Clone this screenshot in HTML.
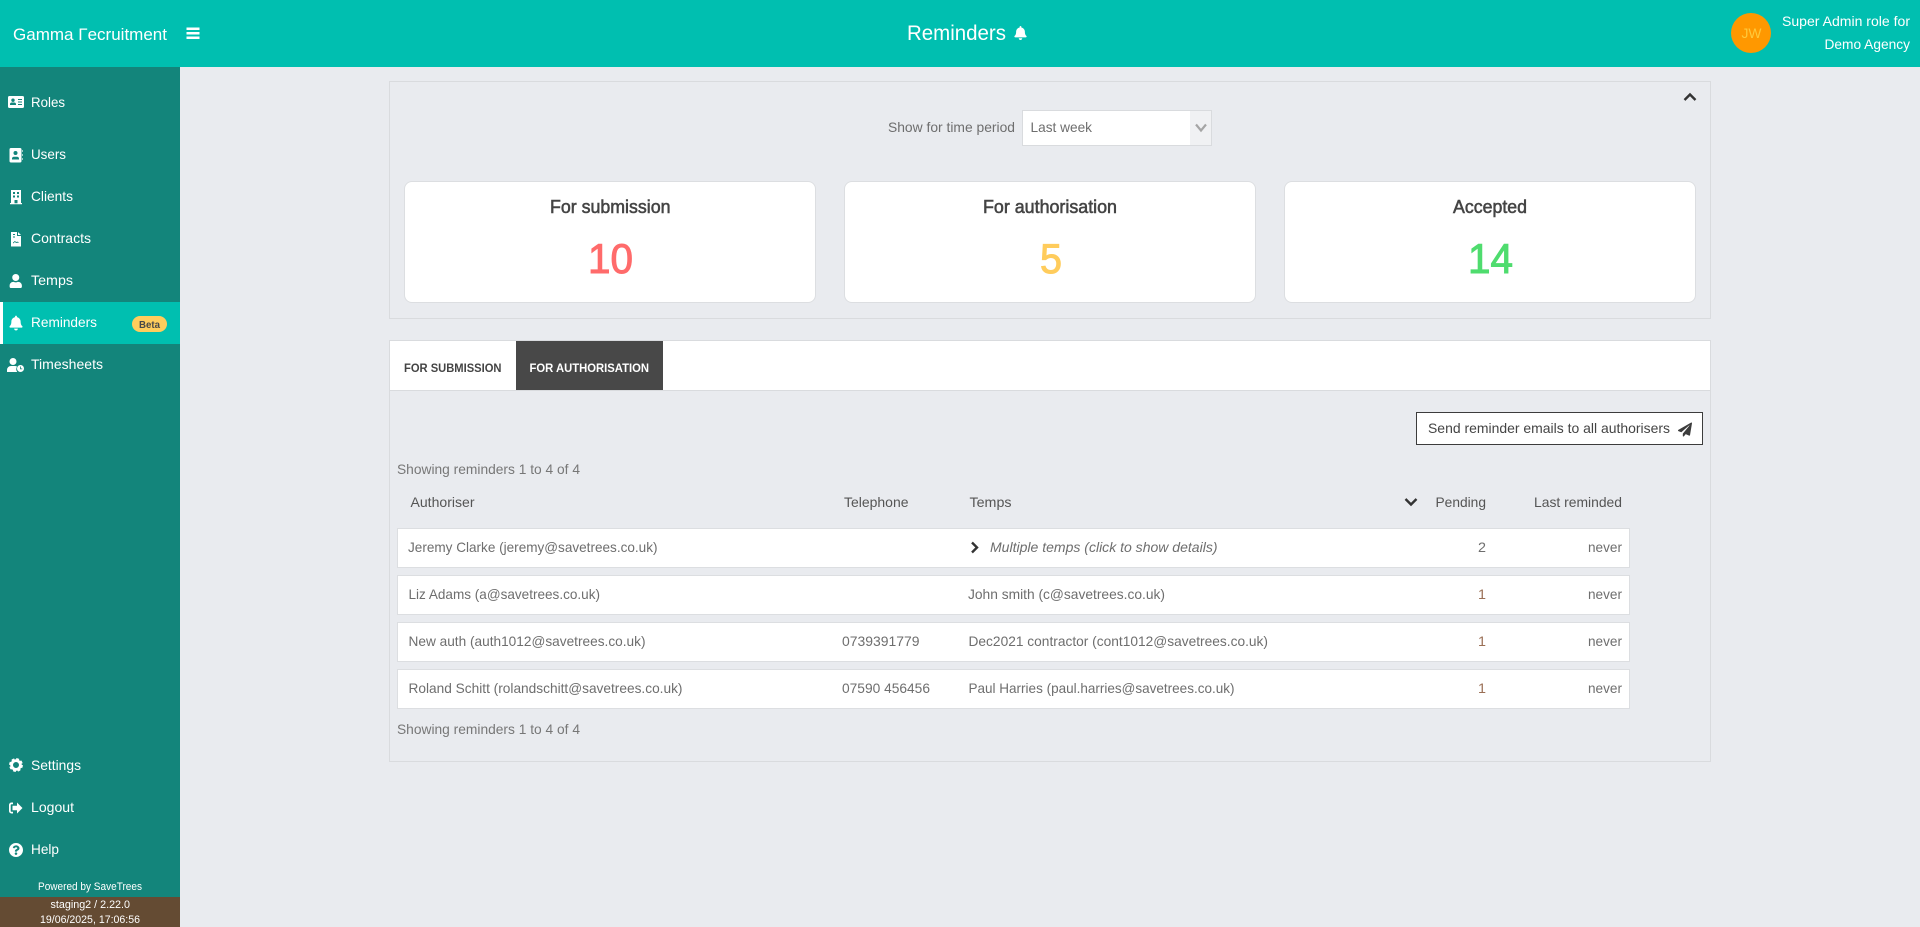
<!DOCTYPE html>
<html lang="en"><head><meta charset="utf-8"><title>Reminders</title>
<style>
html,body{margin:0;padding:0;width:1920px;height:927px;overflow:hidden;background:#e9ebef;font-family:"Liberation Sans",sans-serif}
.b{position:absolute;box-sizing:border-box}
.row{left:397px;width:1233px;height:40px;background:#fff;border:1px solid #dcdee1}
svg.t{position:absolute;left:0;top:0}
text{font-family:"Liberation Sans",sans-serif;font-size:14px;fill:#6e6e6e}
.s text{fill:#fff}
.card{background:#fff;border:1px solid #dcdee1;border-radius:8px;top:181px;height:122px}
.title{font-size:18px;fill:#444;stroke:#444;stroke-width:.55px}
.num{font-size:42px;stroke-width:1px}
.h{fill:#555}
</style></head><body>
<div class="b" style="left:0;top:0;width:1920px;height:67px;background:#00bfb0"></div>
<div class="b" style="left:0;top:67px;width:180px;height:860px;background:#13857b"></div>
<div class="b" style="left:0;top:302px;width:180px;height:42px;background:#00bfb0;border-left:3px solid #fff"></div>
<div class="b" style="left:0;top:897px;width:180px;height:30px;background:#644b33"></div>
<div class="b" style="left:132px;top:316px;width:35px;height:16px;border-radius:8px;background:#ffcd5c"></div>

<div class="b" style="left:389px;top:81px;width:1322px;height:238px;border:1px solid #d9dbde"></div>
<div class="b" style="left:1022px;top:110px;width:190px;height:36px;background:#fff;border:1px solid #d9dbde"></div>
<div class="b" style="left:1190px;top:111px;width:21px;height:34px;background:#f0f1f3"></div>
<div class="b card" style="left:404px;width:412px"></div>
<div class="b card" style="left:844px;width:412px"></div>
<div class="b card" style="left:1284px;width:412px"></div>

<div class="b" style="left:389px;top:340px;width:1322px;height:422px;border:1px solid #d9dbde"></div>
<div class="b" style="left:390px;top:341px;width:1320px;height:50px;background:#fff;border-bottom:1px solid #d9dbde"></div>
<div class="b" style="left:516px;top:341px;width:147px;height:49px;background:#484848"></div>
<div class="b" style="left:1416px;top:412px;width:287px;height:33px;background:#fff;border:1px solid #3c3c3c"></div>
<div class="b row" style="top:528px"></div>
<div class="b row" style="top:575px"></div>
<div class="b row" style="top:622px"></div>
<div class="b row" style="top:669px"></div>
<div class="b" style="left:1731px;top:13px;width:40px;height:40px;border-radius:50%;background:#ff9800"></div>

<svg class="t" width="1920" height="927" viewBox="0 0 1920 927" xmlns="http://www.w3.org/2000/svg">
<!-- header -->
<g class="s">
<text x="13" y="40" style="font-size:17px" textLength="154" lengthAdjust="spacingAndGlyphs">Gamma Γecruitment</text>
<text x="907" y="40" style="font-size:21px" textLength="99" lengthAdjust="spacingAndGlyphs">Reminders</text>
<text x="1782" y="26" textLength="128" lengthAdjust="spacingAndGlyphs">Super Admin role for</text>
<text x="1824.5" y="49" textLength="85.5" lengthAdjust="spacingAndGlyphs">Demo Agency</text>
</g>
<text x="1741.5" y="38" style="fill:#ffc93c" textLength="20" lengthAdjust="spacingAndGlyphs">JW</text>
<path d="M186.500 27.500h13v2.500h-13zM186.500 32h13v2.500h-13zM186.500 36.500h13v2.500h-13z" fill="#fff"/>
<svg x="1014" y="26" width="13" height="14" viewBox="0 0 448 512" fill="#fff"><path d="M224 512c35.320 0 63.970-28.650 63.970-64H160.030c0 35.350 28.650 64 63.970 64zm215.390-149.710c-19.320-20.760-55.470-51.990-55.470-154.290 0-77.700-54.480-139.900-127.940-155.160V32c0-17.670-14.320-32-31.980-32s-31.980 14.330-31.980 32v20.840C118.560 68.100 64.080 130.300 64.080 208c0 102.300-36.150 133.530-55.470 154.290-6 6.450-8.660 14.160-8.610 21.710.11 16.400 12.980 32 32.100 32h383.800c19.120 0 32-15.600 32.100-32 .05-7.550-2.610-15.270-8.610-21.710z"/></svg>

<!-- sidebar -->
<g class="s">
<text x="31" y="107" textLength="34" lengthAdjust="spacingAndGlyphs">Roles</text>
<text x="31" y="159" textLength="35" lengthAdjust="spacingAndGlyphs">Users</text>
<text x="31" y="201" textLength="42" lengthAdjust="spacingAndGlyphs">Clients</text>
<text x="31" y="243" textLength="60" lengthAdjust="spacingAndGlyphs">Contracts</text>
<text x="31" y="285" textLength="42" lengthAdjust="spacingAndGlyphs">Temps</text>
<text x="31" y="327" textLength="66" lengthAdjust="spacingAndGlyphs">Reminders</text>
<text x="31" y="369" textLength="72" lengthAdjust="spacingAndGlyphs">Timesheets</text>
<text x="31" y="770" textLength="50" lengthAdjust="spacingAndGlyphs">Settings</text>
<text x="31" y="812" textLength="43" lengthAdjust="spacingAndGlyphs">Logout</text>
<text x="31" y="854" textLength="28" lengthAdjust="spacingAndGlyphs">Help</text>
<text x="38" y="890" style="font-size:11px" textLength="104" lengthAdjust="spacingAndGlyphs">Powered by SaveTrees</text>
<text x="50.500" y="908" style="font-size:11px" textLength="79.500" lengthAdjust="spacingAndGlyphs">staging2 / 2.22.0</text>
<text x="40" y="923" style="font-size:11px" textLength="100" lengthAdjust="spacingAndGlyphs">19/06/2025, 17:06:56</text>
</g>
<text x="139" y="328" style="font-size:10px;font-weight:bold;fill:#484848" textLength="21" lengthAdjust="spacingAndGlyphs">Beta</text>

<!-- sidebar icons -->
<g fill="#fff">
<path fill-rule="evenodd" d="M9.500 96h13a1.500 1.500 0 0 1 1.500 1.500v9a1.500 1.500 0 0 1-1.500 1.500h-13A1.500 1.500 0 0 1 8 106.500v-9A1.500 1.500 0 0 1 9.500 96zM13 98.500a1.700 1.700 0 1 0 0 3.400 1.700 1.700 0 0 0 0-3.400zM10 105h6v-1a1.800 1.800 0 0 0-1.800-1.500h-2.400A1.800 1.800 0 0 0 10 104zM18 99v1h4v-1zM18 101.500v1h4v-1zM18 104v1h4v-1z"/>
<path fill-rule="evenodd" d="M11 148h9a1.500 1.500 0 0 1 1.500 1.500v11.500a1.500 1.500 0 0 1-1.500 1.500h-9a1.500 1.500 0 0 1-1.500-1.500v-11.500A1.500 1.500 0 0 1 11 148zM15.500 151a2 2 0 1 0 0 4 2 2 0 0 0 0-4zM12 159.500h7v-1a2 2 0 0 0-2-1.800h-3a2 2 0 0 0-2 1.800z"/>
<path d="M22 150h.6v2H22zM22 154h.6v2H22zM22 158h.6v2H22z"/>
<path fill-rule="evenodd" d="M11 190h10v13h1v1.200H10V203h1zM13 192v2h2v-2zM17 192v2h2v-2zM13 195.500v2h2v-2zM17 195.500v2h2v-2zM14.500 200v3.200h3V200z"/>
<path fill-rule="evenodd" d="M11 232h6v4h4v10.500H11zM18 232l3 3h-3zM13 234v1h2v-1zM13 236.500v1h2v-1zM13 242.500c1-.5 1.500-1.500 2-1.500s.5 1 1 1 1-.5 2.500 0v1c-1.500-.5-2 0-2.500 0s-.5-1-1-1-1 1-2 1.500z"/>
<svg x="9.500" y="274" width="12.500" height="14" viewBox="0 0 448 512"><path d="M224 256c70.700 0 128-57.300 128-128S294.700 0 224 0 96 57.300 96 128s57.300 128 128 128zm89.600 32h-16.700c-22.200 10.200-46.900 16-72.900 16s-50.600-5.800-72.900-16h-16.700C60.200 288 0 348.200 0 422.400V464c0 26.500 21.500 48 48 48h352c26.500 0 48-21.500 48-48v-41.600c0-74.200-60.200-134.400-134.400-134.400z"/></svg>
<svg x="9.500" y="315.500" width="13" height="15" viewBox="0 0 448 512"><path d="M224 512c35.320 0 63.970-28.650 63.970-64H160.030c0 35.350 28.650 64 63.970 64zm215.390-149.710c-19.320-20.760-55.470-51.990-55.470-154.290 0-77.700-54.480-139.900-127.940-155.160V32c0-17.670-14.320-32-31.980-32s-31.980 14.330-31.980 32v20.840C118.560 68.100 64.080 130.300 64.080 208c0 102.300-36.150 133.530-55.470 154.290-6 6.450-8.660 14.160-8.610 21.710.11 16.400 12.980 32 32.100 32h383.800c19.120 0 32-15.600 32.100-32 .05-7.550-2.610-15.270-8.610-21.710z"/></svg>
<circle cx="13" cy="361.500" r="3.500"/>
<path d="M7 372v-2a4 4 0 0 1 4-4h4a4 4 0 0 1 2 .6 5 5 0 0 0 .2 5.400z"/>
<circle cx="20.500" cy="368.500" r="3.500"/>
<path d="M20.100 366.500h.8v2h1.400v.8h-2.200z" fill="#13857b"/>
<circle cx="16" cy="765" r="4.400" fill="none" stroke="#fff" stroke-width="2.800"/>
<circle cx="16" cy="765" r="6" fill="none" stroke="#fff" stroke-width="1.800" stroke-dasharray="2.900 1.810"/>
<path d="M13 802.500H11.500A2.500 2.500 0 0 0 9 805v6a2.500 2.500 0 0 0 2.500 2.500H13v-1.700h-1.500a.8.800 0 0 1-.8-.8v-6a.8.800 0 0 1 .8-.8H13z"/>
<path d="M17 802.500l5.500 5.500-5.500 5.500v-3.200h-4.500v-4.600H17z"/>
<svg x="9" y="843" width="14" height="14" viewBox="8 8 496 496"><path d="M504 256c0 136.997-111.043 248-248 248S8 392.997 8 256C8 119.083 119.043 8 256 8s248 111.083 248 248zM262.655 90c-54.497 0-89.255 22.957-116.549 63.758-3.536 5.286-2.353 12.415 2.715 16.258l34.699 26.310c5.205 3.947 12.621 3.008 16.665-2.122 17.864-22.658 30.113-35.797 57.303-35.797 20.429 0 45.698 13.148 45.698 32.958 0 14.976-12.363 22.667-32.534 33.976C247.128 238.528 216 254.941 216 296v4c0 6.627 5.373 12 12 12h56c6.627 0 12-5.373 12-12v-1.333c0-28.462 83.186-29.647 83.186-106.667 0-58.002-60.165-102-116.531-102zM256 338c-25.365 0-46 20.635-46 46 0 25.364 20.635 46 46 46s46-20.636 46-46c0-25.365-20.635-46-46-46z"/></svg>
</g>

<!-- filter panel -->
<path d="M1684.500 100l5.500-5.500 5.500 5.500" fill="none" stroke="#333" stroke-width="2.400"/>
<text x="888" y="132" textLength="127" lengthAdjust="spacingAndGlyphs">Show for time period</text>
<text x="1030.500" y="132" textLength="61.500" lengthAdjust="spacingAndGlyphs">Last week</text>
<path d="M1196 124.500l5 6 5-6" fill="none" stroke="#a5a5a5" stroke-width="2.200"/>
<text x="550" y="213" class="title" textLength="120.500" lengthAdjust="spacingAndGlyphs" style="font-size:18px">For submission</text>
<text x="983" y="213" class="title" textLength="134" lengthAdjust="spacingAndGlyphs" style="font-size:18px">For authorisation</text>
<text x="1453" y="213" class="title" textLength="74" lengthAdjust="spacingAndGlyphs" style="font-size:18px">Accepted</text>
<text x="588" y="273" class="num" style="font-size:42px;fill:#ff6b6b;stroke:#ff6b6b" textLength="45" lengthAdjust="spacingAndGlyphs">10</text>
<text x="1040" y="273" class="num" style="font-size:42px;fill:#ffcc5c;stroke:#ffcc5c" textLength="22" lengthAdjust="spacingAndGlyphs">5</text>
<text x="1468" y="273" class="num" style="font-size:42px;fill:#4fdc6e;stroke:#4fdc6e" textLength="45" lengthAdjust="spacingAndGlyphs">14</text>

<!-- tabs -->
<text x="404" y="372" style="font-size:11.500px;font-weight:bold;fill:#444" textLength="97.500" lengthAdjust="spacingAndGlyphs">FOR SUBMISSION</text>
<text x="529.500" y="372" style="font-size:11.500px;font-weight:bold;fill:#fff" textLength="119.500" lengthAdjust="spacingAndGlyphs">FOR AUTHORISATION</text>

<!-- button -->
<text x="1428" y="433" style="fill:#444" textLength="242" lengthAdjust="spacingAndGlyphs">Send reminder emails to all authorisers</text>
<svg x="1678" y="422.500" width="14" height="14" viewBox="0 0 512 512" fill="#3c3c3c"><path d="M476 3.200L12.500 270.600c-18.100 10.400-15.800 35.600 2.200 43.200L121 358.400l287.300-253.200c5.500-4.900 13.300 2.600 8.600 8.300L176 407v80.500c0 23.600 28.500 32.900 42.500 15.800L282 426l124.600 52.200c14.200 6 30.400-2.900 33-18.200l72-432C515 7.800 493.300-6.800 476 3.200z"/></svg>

<!-- table -->
<text x="397" y="474" style="fill:#777" textLength="183" lengthAdjust="spacingAndGlyphs">Showing reminders 1 to 4 of 4</text>
<text x="410.500" y="507" class="h" textLength="64" lengthAdjust="spacingAndGlyphs">Authoriser</text>
<text x="844" y="507" class="h" textLength="64.500" lengthAdjust="spacingAndGlyphs">Telephone</text>
<text x="969.500" y="507" class="h" textLength="42" lengthAdjust="spacingAndGlyphs">Temps</text>
<path d="M1405.500 499l5.500 5.500 5.500-5.500" fill="none" stroke="#333" stroke-width="2.400"/>
<text x="1435.500" y="507" class="h" textLength="50.500" lengthAdjust="spacingAndGlyphs">Pending</text>
<text x="1534" y="507" class="h" textLength="88" lengthAdjust="spacingAndGlyphs">Last reminded</text>

<text x="408" y="552" textLength="249.500" lengthAdjust="spacingAndGlyphs">Jeremy Clarke (jeremy@savetrees.co.uk)</text>
<path d="M972 542.500l5 5-5 5" fill="none" stroke="#333" stroke-width="2.400"/>
<text x="990" y="552" style="font-style:italic" textLength="227.500" lengthAdjust="spacingAndGlyphs">Multiple temps (click to show details)</text>
<text x="1478" y="552" textLength="8" lengthAdjust="spacingAndGlyphs">2</text>
<text x="1588" y="552" textLength="34" lengthAdjust="spacingAndGlyphs">never</text>

<text x="408.500" y="599" textLength="191.500" lengthAdjust="spacingAndGlyphs">Liz Adams (a@savetrees.co.uk)</text>
<text x="968" y="599" textLength="197" lengthAdjust="spacingAndGlyphs">John smith (c@savetrees.co.uk)</text>
<text x="1478" y="599" style="fill:#9a6f55" textLength="8" lengthAdjust="spacingAndGlyphs">1</text>
<text x="1588" y="599" textLength="34" lengthAdjust="spacingAndGlyphs">never</text>

<text x="408.500" y="646" textLength="237" lengthAdjust="spacingAndGlyphs">New auth (auth1012@savetrees.co.uk)</text>
<text x="842" y="646" textLength="77.500" lengthAdjust="spacingAndGlyphs">0739391779</text>
<text x="968.500" y="646" textLength="299.500" lengthAdjust="spacingAndGlyphs">Dec2021 contractor (cont1012@savetrees.co.uk)</text>
<text x="1478" y="646" style="fill:#9a6f55" textLength="8" lengthAdjust="spacingAndGlyphs">1</text>
<text x="1588" y="646" textLength="34" lengthAdjust="spacingAndGlyphs">never</text>

<text x="408.500" y="693" textLength="274" lengthAdjust="spacingAndGlyphs">Roland Schitt (rolandschitt@savetrees.co.uk)</text>
<text x="842" y="693" textLength="88" lengthAdjust="spacingAndGlyphs">07590 456456</text>
<text x="968.500" y="693" textLength="266" lengthAdjust="spacingAndGlyphs">Paul Harries (paul.harries@savetrees.co.uk)</text>
<text x="1478" y="693" style="fill:#9a6f55" textLength="8" lengthAdjust="spacingAndGlyphs">1</text>
<text x="1588" y="693" textLength="34" lengthAdjust="spacingAndGlyphs">never</text>

<text x="397" y="734" style="fill:#777" textLength="183" lengthAdjust="spacingAndGlyphs">Showing reminders 1 to 4 of 4</text>
</svg>
</body></html>
